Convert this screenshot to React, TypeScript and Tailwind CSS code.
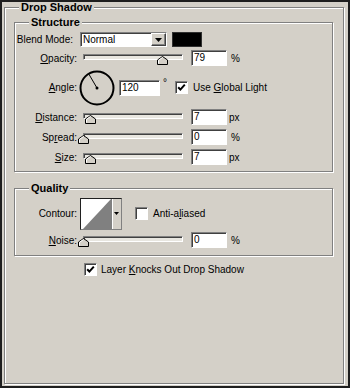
import React from 'react';

const sunken = 'border border-t-[#808080] border-l-[#808080] border-b-white border-r-white shadow-[inset_1px_1px_0_#404040]';

const CheckBox = ({ checked }: { checked?: boolean }) => (
    <span className={`w-[13px] h-[13px] bg-white ${sunken} flex items-center justify-center shrink-0`}>
        {checked && (
            <svg width="9" height="9" viewBox="0 0 9 9">
                <path d="M1.2 4.2 L3.4 6.6 L7.8 1.6" stroke="#000" strokeWidth="2" fill="none" />
            </svg>
        )}
    </span>
);

const Slider = ({ value }: { value: number }) => (
    <div className={`relative w-[100px] h-[6px] mb-[2px] bg-[#e8e6e0] ${sunken} shrink-0`}>
        <svg className="absolute top-[1px]" style={{ left: value - 6 }} width="11" height="9" viewBox="0 0 11 9">
            <path d="M0.5 4 L5.5 0.5 L10.5 4 V8.5 H0.5 Z" fill="#d4d0c8" stroke="#000" />
            <path d="M1.5 4.3 L5.5 1.6 M1.5 4.5 V7.5" stroke="#fff" fill="none" />
        </svg>
    </div>
);

const Field = ({ value, w = 'w-[36px]' }: { value: string; w?: string }) => (
    <div className={`${w} h-[16px] bg-white ${sunken} pl-[2px] leading-[14px] shrink-0`}>{value}</div>
);

const Label = ({ children }: { children: React.ReactNode }) => (
    <div className="w-[62px] text-right shrink-0">{children}</div>
);

const Legend = ({ title }: { title: string }) => (
    <span className="absolute -top-[7px] left-[14px] px-[2px] bg-[#d4d0c8] font-bold text-[11px] leading-[13px]">{title}</span>
);

const SliderRow = ({ label, value, unit }: { label: React.ReactNode; value: number; unit: string }) => (
    <div className="flex items-center h-[20px]">
        <Label>{label}</Label>
        <div className="ml-[6px]"><Slider value={value} /></div>
        <div className="ml-[8px]"><Field value={String(value)} /></div>
        <span className={unit === '%' ? 'ml-[4px]' : 'ml-[2px]'}>{unit}</span>
    </div>
);

export default function App() {
    return (
        <div className="w-[350px] h-[388px] border-2 border-[#1e1e1e] bg-[#d4d0c8] text-black text-[10px] font-['Liberation_Sans',Arial,sans-serif] overflow-hidden">
            {/* Drop Shadow */}
            <div className="relative ml-[2px] mt-[5px] w-[340px] h-[377px] border border-[#808080] shadow-[inset_1px_1px_0_#fff,1px_1px_0_#fff]">
                <Legend title="Drop Shadow" />

                {/* Structure */}
                <div className="relative ml-[9px] mt-[14px] w-[319px] h-[150px] border border-[#808080] shadow-[inset_1px_1px_0_#fff,1px_1px_0_#fff] pt-[8px]">
                    <Legend title="Structure" />

                    <div className="flex items-center h-[17px]">
                        <div className="w-[62px] text-right pr-[4px] shrink-0">Blend Mode:</div>
                        <div className={`ml-[3px] w-[87px] h-[15px] bg-white ${sunken} flex items-center justify-between`}>
                            <span className="pl-[2px] leading-[13px]">Normal</span>
                            <div className="w-[15px] h-[13px] bg-[#d4d0c8] border border-t-white border-l-white border-b-[#404040] border-r-[#404040] shadow-[inset_-1px_-1px_0_#808080] flex items-center justify-center">
                                <svg width="7" height="4" viewBox="0 0 7 4"><path d="M0 0 H7 L3.5 4 Z" fill="#000" /></svg>
                            </div>
                        </div>
                        <div className="ml-[5px] w-[30px] h-[15px] bg-black border border-[#303030]" />
                    </div>

                    <SliderRow label={<><u>O</u>pacity:</>} value={79} unit="%" />

                    <div className="flex items-center h-[39px]">
                        <Label><u>A</u>ngle:</Label>
                        <svg className="ml-[2px] shrink-0" width="36" height="36" viewBox="0 0 36 36">
                            <circle cx="18" cy="18" r="16.5" stroke="#000" strokeWidth="2" fill="none" />
                            <line x1="18" y1="18" x2="9.5" y2="3.5" stroke="#000" strokeWidth="1" />
                            <circle cx="18" cy="18" r="1.5" fill="#000" />
                        </svg>
                        <div className="ml-[4px]"><Field value="120" w="w-[41px]" /></div>
                        <span className="ml-[3px] self-start mt-[10px] leading-[10px]">°</span>
                        <div className="ml-[8px]"><CheckBox checked /></div>
                        <span className="ml-[5px]">Use <u>G</u>lobal Light</span>
                    </div>

                    <SliderRow label={<><u>D</u>istance:</>} value={7} unit="px" />
                    <SliderRow label={<>Sp<u>r</u>ead:</>} value={0} unit="%" />
                    <SliderRow label={<><u>S</u>ize:</>} value={7} unit="px" />
                </div>

                {/* Quality */}
                <div className="relative ml-[9px] mt-[16px] w-[319px] h-[68px] border border-[#808080] shadow-[inset_1px_1px_0_#fff,1px_1px_0_#fff] pt-[8px]">
                    <Legend title="Quality" />

                    <div className="flex items-center h-[33px]">
                        <Label>Contour:</Label>
                        <div className="ml-[3px] w-[42px] h-[32px] flex border border-[#202020] border-b-[#808080] border-r-[#808080]">
                            <svg width="30" height="30" viewBox="0 0 30 30" className="shrink-0">
                                <rect width="30" height="30" fill="#fff" />
                                <path d="M2 30 L30 0 V30 Z" fill="#808080" />
                            </svg>
                            <div className="flex-1 bg-[#d4d0c8] border-l border-[#808080] shadow-[inset_1px_0_0_#fff] flex items-center justify-center">
                                <svg width="5" height="3" viewBox="0 0 5 3"><path d="M0 0 H5 L2.5 3 Z" fill="#000" /></svg>
                            </div>
                        </div>
                        <div className="ml-[13px]"><CheckBox /></div>
                        <span className="ml-[5px]">Anti-a<u>l</u>iased</span>
                    </div>

                    <SliderRow label={<><u>N</u>oise:</>} value={0} unit="%" />
                </div>

                <div className="flex items-center h-[13px] mt-[7px] ml-[79px]">
                    <CheckBox checked />
                    <span className="ml-[4px]">Layer <u>K</u>nocks Out Drop Shadow</span>
                </div>
            </div>
        </div>
    );
}
